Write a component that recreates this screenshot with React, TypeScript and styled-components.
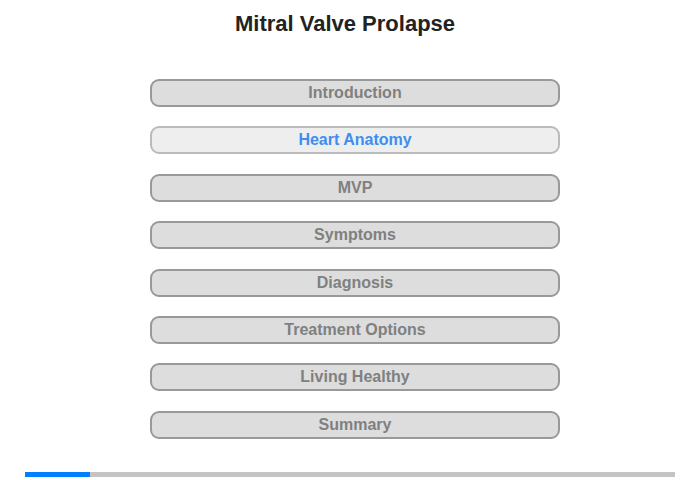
import React from "react";
import styled, { createGlobalStyle } from "styled-components";

const chapters = [
  "Introduction",
  "Heart Anatomy",
  "MVP",
  "Symptoms",
  "Diagnosis",
  "Treatment Options",
  "Living Healthy",
  "Summary",
];

const activeIndex = 1;
const progress = 0.1;

const GlobalStyle = createGlobalStyle`
  html, body {
    margin: 0;
    padding: 0;
    background: #ffffff;
    font-family: "Liberation Sans", Arial, sans-serif;
  }
`;

const Page_div = styled.div`
  width: 700px;
  height: 480px;
  display: flex;
  flex-direction: column;
  align-items: center;
`;

const Title_h1 = styled.h1`
  margin: 11px 10px 0 0;
  font-size: 22px;
  line-height: 25px;
  font-weight: bold;
  color: #222222;
`;

const Menu_nav = styled.nav`
  margin: 43px 0 0 10px;
  width: 410px;
  display: flex;
  flex-direction: column;
  gap: 19.4px;
`;

const Chapter_button = styled.button<{ $active: boolean }>`
  box-sizing: border-box;
  width: 410px;
  height: 28px;
  padding: 0;
  border-radius: 9px;
  border: 2px solid ${({ $active }) => ($active ? "#bbbbbb" : "#999999")};
  background: ${({ $active }) => ($active ? "#eeeeee" : "#dddddd")};
  color: ${({ $active }) => ($active ? "#3d8ef0" : "#808080")};
  font-family: "Liberation Sans", Arial, sans-serif;
  font-size: 16px;
  font-weight: bold;
  text-align: center;
  cursor: pointer;
`;

const Progress_div = styled.div`
  margin-top: auto;
  margin-bottom: 3px;
  width: 650px;
  height: 5px;
  background: #c4c4c4;
`;

const ProgressFill_div = styled.div`
  height: 100%;
  background: #0080ff;
`;

const App = () => {
  return (
    <>
      <GlobalStyle />
      <Page_div>
        <Title_h1>Mitral Valve Prolapse</Title_h1>
        <Menu_nav>
          {chapters.map((name, index) => (
            <Chapter_button key={name} $active={index === activeIndex}>
              {name}
            </Chapter_button>
          ))}
        </Menu_nav>
        <Progress_div>
          <ProgressFill_div style={{ width: `${progress * 100}%` }} />
        </Progress_div>
      </Page_div>
    </>
  );
};

export default App;
